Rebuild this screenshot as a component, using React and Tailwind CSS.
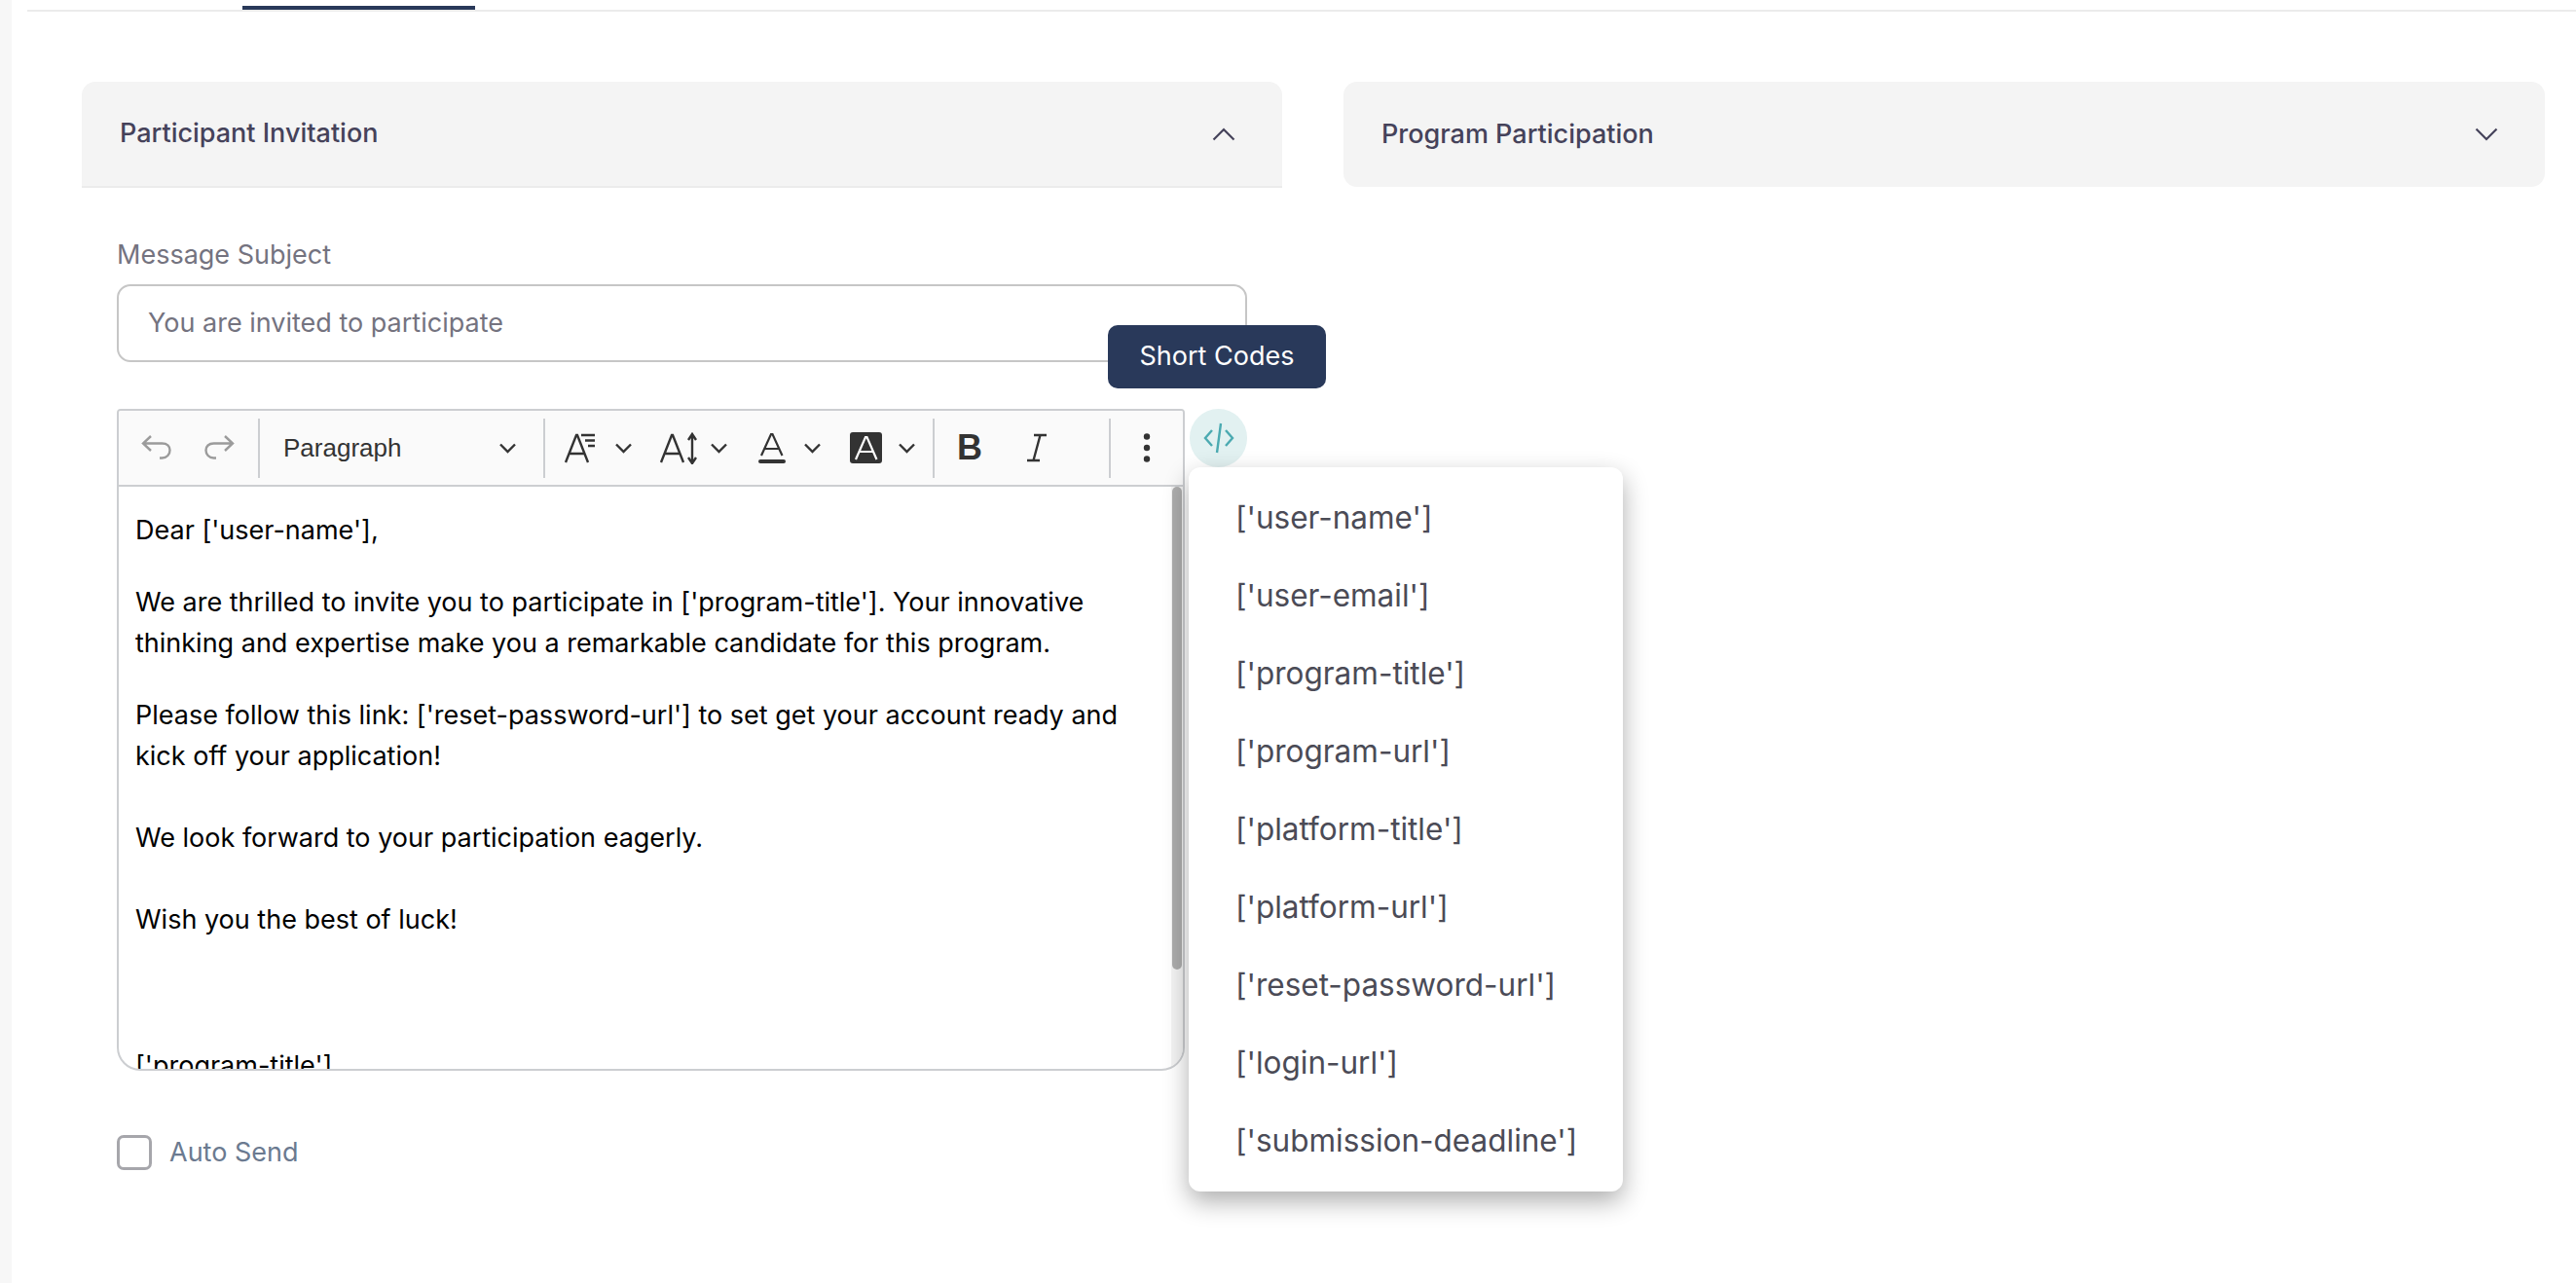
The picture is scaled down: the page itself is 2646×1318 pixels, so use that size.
import React from "react";

const codes = ["['user-name']","['user-email']","['program-title']","['program-url']","['platform-title']","['platform-url']","['reset-password-url']","['login-url']","['submission-deadline']"];

function Chev() {
  return (
    <svg width="19" height="12" viewBox="0 0 19 12" className="shrink-0" fill="none" stroke="#333" strokeWidth="2.4">
      <path d="M2 2.500 9.500 10 17 2.500" />
    </svg>
  );
}

function Sep() {
  return <div className="w-[2px] h-[61px] bg-[#ccced1] shrink-0" />;
}

function Toolbar() {
  return (
    <div className="h-[78px] bg-[#fafafa] border-b-2 border-[#ccced1] flex items-center pl-[22px] font-['Liberation_Sans',sans-serif] text-[#333]">
      <svg width="33" height="30" viewBox="0 0 33 30" fill="none" stroke="#9b9b9b" strokeWidth="2.4" className="shrink-0">
        <path d="M11 3 3 10.500l8 7.500M3.500 10.500h19c5 0 8 3 8 7s-3 8-8 8h-2.500" />
      </svg>
      <svg width="33" height="30" viewBox="0 0 33 30" fill="none" stroke="#9b9b9b" strokeWidth="2.4" className="shrink-0 ml-[32px]">
        <path d="M22 3l8 7.500-8 7.500M29.500 10.500h-19c-5 0-8 3-8 7s3 8 8 8H13" />
      </svg>
      <div className="ml-[23px]"><Sep /></div>
      <span className="ml-[24px] w-[221px] text-[26px] shrink-0">Paragraph</span>
      <Chev />
      <div className="ml-[27px]"><Sep /></div>
      <svg width="35" height="32" viewBox="0 0 35 32" fill="none" stroke="#333" strokeWidth="2.4" className="ml-[19px] shrink-0">
        <path d="M2 31 13 3h1l11 28M6.500 22h15M18 3h14M22 8.500h10M25 14h7" />
      </svg>
      <div className="ml-[17px]"><Chev /></div>
      <svg width="40" height="34" viewBox="0 0 40 34" fill="none" stroke="#333" strokeWidth="2.4" className="ml-[27px] shrink-0">
        <path d="M2 32 13 4h1l11 28M6.500 23h15M34 5v26M30 9l4-6 4 6M30 27l4 6 4-6" />
      </svg>
      <div className="ml-[12px]"><Chev /></div>
      <svg width="30" height="34" viewBox="0 0 30 34" fill="none" stroke="#333" strokeWidth="2.2" className="ml-[30px] shrink-0">
        <path d="M4 25 14 3h1.500l10 22M8 18h14" />
        <rect x="1" y="29" width="28" height="4" rx="2" fill="#333" stroke="none" />
      </svg>
      <div className="ml-[17px]"><Chev /></div>
      <svg width="33" height="32" viewBox="0 0 33 32" className="ml-[29px] shrink-0">
        <rect width="33" height="32" rx="3" fill="#333" />
        <path d="M6 28 16 5h1.500l10 23M10 20h14" fill="none" stroke="#fff" strokeWidth="2.200" />
      </svg>
      <div className="ml-[16px]"><Chev /></div>
      <div className="ml-[17px]"><Sep /></div>
      <span className="ml-[23px] w-[26px] shrink-0 text-[36px] font-bold leading-[30px]">B</span>
      <svg width="22" height="30" viewBox="0 0 22 30" fill="none" stroke="#333" strokeWidth="2.4" className="ml-[45px] shrink-0">
        <path d="M8 2h13M1 28h13M14.500 2 7.500 28" />
      </svg>
      <div className="ml-[63px]"><Sep /></div>
      <svg width="8" height="30" viewBox="0 0 8 30" fill="#333" className="ml-[33px] shrink-0">
        <circle cx="4" cy="3.500" r="3.200" />
        <circle cx="4" cy="15" r="3.200" />
        <circle cx="4" cy="26.500" r="3.200" />
      </svg>
    </div>
  );
}

function Accordion({ title, open }) {
  return (
    <div className={`flex items-center justify-between pl-[39px] pr-[48px] bg-[#f4f4f4] ${open ? "h-[109px] rounded-t-[14px] border-b-2 border-[#ebebeb]" : "h-[108px] rounded-[14px]"}`}>
      <span className="text-[27px] font-medium text-[#45425a]">{title}</span>
      <svg width="24" height="14" viewBox="0 0 24 14" fill="none" stroke="#45425a" strokeWidth="2.200" className="shrink-0">
        <path d={open ? "M1.500 12.500 12 2l10.500 10.500" : "M1.500 1.500 12 12 22.500 1.500"} />
      </svg>
    </div>
  );
}

export default function App() {
  return (
    <div className="w-[2646px] h-[1318px] overflow-hidden flex bg-white font-['Inter',sans-serif]">
      <div className="w-[12px] bg-[#f7f7f7] shrink-0" />
      <div className="flex-1 min-w-0 flex flex-col">
        <div className="ml-[16px] h-[12px] border-b-2 border-[#ebebeb] pl-[221px] shrink-0">
          <div className="w-[239px] h-[4px] mt-[6px] bg-[#29395a]" />
        </div>
        <div className="grid grid-cols-[1233px_1234px] gap-x-[63px] pl-[72px] pt-[72px]">
          <div className="relative">
            <Accordion title="Participant Invitation" open />
            <div className="pl-[36px] pr-[36px] pt-[53px]">
              <div className="text-[27px] leading-[32px] text-[#74737f]">Message Subject</div>
              <div className="mt-[14px] h-[80px] rounded-[14px] border-2 border-[#c6c6c6] flex items-center pl-[30px] text-[27px] text-[#74737f]">
                You are invited to participate
              </div>
              <div className="mt-[48px] w-[1097px] h-[680px] rounded-b-[24px] rounded-t-[4px] border-2 border-[#ccced1] overflow-hidden relative">
                <Toolbar />
                <div className="px-[17px] pt-[24px] text-[27px] leading-[42px] text-black whitespace-nowrap">
                  <p>Dear ['user-name'],</p>
                  <p className="mt-[32px]">We are thrilled to invite you to participate in ['program-title']. Your innovative<br />thinking and expertise make you a remarkable candidate for this program.</p>
                  <p className="mt-[32px]">Please follow this link: ['reset-password-url'] to set get your account ready and<br />kick off your application!</p>
                  <p className="mt-[42px]">We look forward to your participation eagerly.</p>
                  <p className="mt-[42px]">Wish you the best of luck!</p>
                  <p className="mt-[108px]">['program-title']</p>
                </div>
                <div className="absolute right-0 top-[78px] bottom-0 w-[12px] bg-[#f4f4f4]">
                  <div className="h-[496px] w-[10px] mx-auto rounded-full bg-[#adadad]" />
                </div>
              </div>
              <div className="mt-[64px] flex items-center">
                <div className="w-[36px] h-[36px] rounded-[7px] border-[3px] border-[#a6a6ab] bg-white" />
                <span className="ml-[18px] text-[27px] text-[#6b7a90]">Auto Send</span>
              </div>
            </div>
            <div className="absolute left-[1054px] top-[250px] h-[65px] w-[224px] rounded-[10px] bg-[#29395a] text-white text-[27px] flex items-center justify-center">Short Codes</div>
            <div className="absolute left-[1138px] top-[336px] w-[59px] h-[60px] rounded-full bg-[#e2f1f1] flex items-center justify-center">
              <svg width="32" height="34" viewBox="0 0 32 34" fill="none" stroke="#4baab1" strokeWidth="2.4">
                <path d="M9 9 2 17l7 8M23 9l7 8-7 8M18 2l-4 30" />
              </svg>
            </div>
            <div className="absolute left-[1137px] top-[396px] w-[446px] h-[744px] rounded-[12px] bg-white shadow-[0_10px_26px_rgba(0,0,0,0.32)] flex flex-col pt-[12px] pl-[48px] text-[31.500px] text-[#4b4b56]">
              {codes.map((c) => (
                <div key={c} className="h-[80px] flex items-center shrink-0">{c}</div>
              ))}
            </div>
          </div>
          <div>
            <Accordion title="Program Participation" />
          </div>
        </div>
      </div>
    </div>
  );
}
